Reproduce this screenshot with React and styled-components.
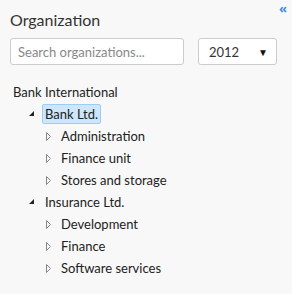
import React from 'react';
import styled, { createGlobalStyle } from 'styled-components';

const Global = createGlobalStyle`
html, body {
  margin: 0;
  padding: 0;
  background: #f8f8f8;
}
body {
  font-family: Lato, "Open Sans", sans-serif;
  color: #222;
}
`;

const Panel = styled.div`
position: relative;
width: 292px;
height: 294px;
box-sizing: border-box;
padding: 9px 10px 0 10px;
background: #f8f8f8;
`;

const Collapse = styled.button`
position: absolute;
top: 1px;
right: 5px;
padding: 0;
border: none;
background: transparent;
color: #3d8ee6;
font: bold 13px/14px "Open Sans", sans-serif;
cursor: pointer;
`;

const Title = styled.h2`
margin: 0;
font: normal 400 16px/22px Lato, sans-serif;
color: #333;
`;

const Filters = styled.div`
display: flex;
gap: 14px;
margin-top: 7px;
`;

const Search = styled.input`
width: 174px;
height: 27px;
box-sizing: border-box;
padding: 0 7px;
border: 1px solid #ccc;
border-radius: 3px;
background: #fff;
font: normal 13px Lato, sans-serif;
color: #333;
outline: none;
&::placeholder {
  color: #888;
}
`;

const Select = styled.div`
display: flex;
align-items: center;
justify-content: space-between;
width: 79px;
height: 27px;
box-sizing: border-box;
padding: 1px 8px 0 10px;
border: 1px solid #ccc;
border-radius: 3px;
background: #fff;
font: normal 13px Lato, sans-serif;
color: #333;
`;

const Caret = styled.span`
font-size: 10px;
color: #111;
`;

const Tree = styled.ul`
list-style: none;
margin: 16px 0 0 0;
padding: 0;
`;

const Group = styled.ul`
list-style: none;
margin: 0;
padding: 0 0 0 16px;
`;

const Row = styled.div`
display: flex;
align-items: center;
height: 22px;
`;

const Toggle = styled.span`
display: inline-flex;
align-items: center;
width: 13px;
height: 22px;
padding-left: 3px;
`;

const Label = styled.span`
padding: 1px 2px;
border: 1px solid ${(p) => (p.$selected ? '#99cefb' : 'transparent')};
border-radius: 2px;
background: ${(p) => (p.$selected ? '#cde6fb' : 'transparent')};
font: normal 13px/16px Lato, sans-serif;
color: #222;
`;

function Expanded() {
  return (
    <svg width="6" height="6" viewBox="0 0 6 6">
      <polygon points="5,0 5,5 0,5" fill="#222" />
    </svg>
  );
}

function Collapsed() {
  return (
    <svg width="6" height="9" viewBox="0 0 6 9">
      <polygon points="1.5,0.5 5.5,4.5 1.5,8.5" fill="none" stroke="#888" strokeWidth="1" />
    </svg>
  );
}

const data = [
  {
    name: 'Bank Ltd.',
    selected: true,
    children: ['Administration', 'Finance unit', 'Stores and storage'],
  },
  {
    name: 'Insurance Ltd.',
    children: ['Development', 'Finance', 'Software services'],
  },
];

export default function App() {
  return (
    <Panel>
      <Global />
      <Collapse>«</Collapse>
      <Title>Organization</Title>
      <Filters>
        <Search placeholder="Search organizations..." />
        <Select>
          2012
          <Caret>▼</Caret>
        </Select>
      </Filters>
      <Tree>
        <li>
          <Row>
            <Label>Bank International</Label>
          </Row>
          <Group>
            {data.map((company) => (
              <li key={company.name}>
                <Row>
                  <Toggle><Expanded /></Toggle>
                  <Label $selected={company.selected}>{company.name}</Label>
                </Row>
                <Group>
                  {company.children.map((child) => (
                    <li key={child}>
                      <Row>
                        <Toggle><Collapsed /></Toggle>
                        <Label>{child}</Label>
                      </Row>
                    </li>
                  ))}
                </Group>
              </li>
            ))}
          </Group>
        </li>
      </Tree>
    </Panel>
  );
}
